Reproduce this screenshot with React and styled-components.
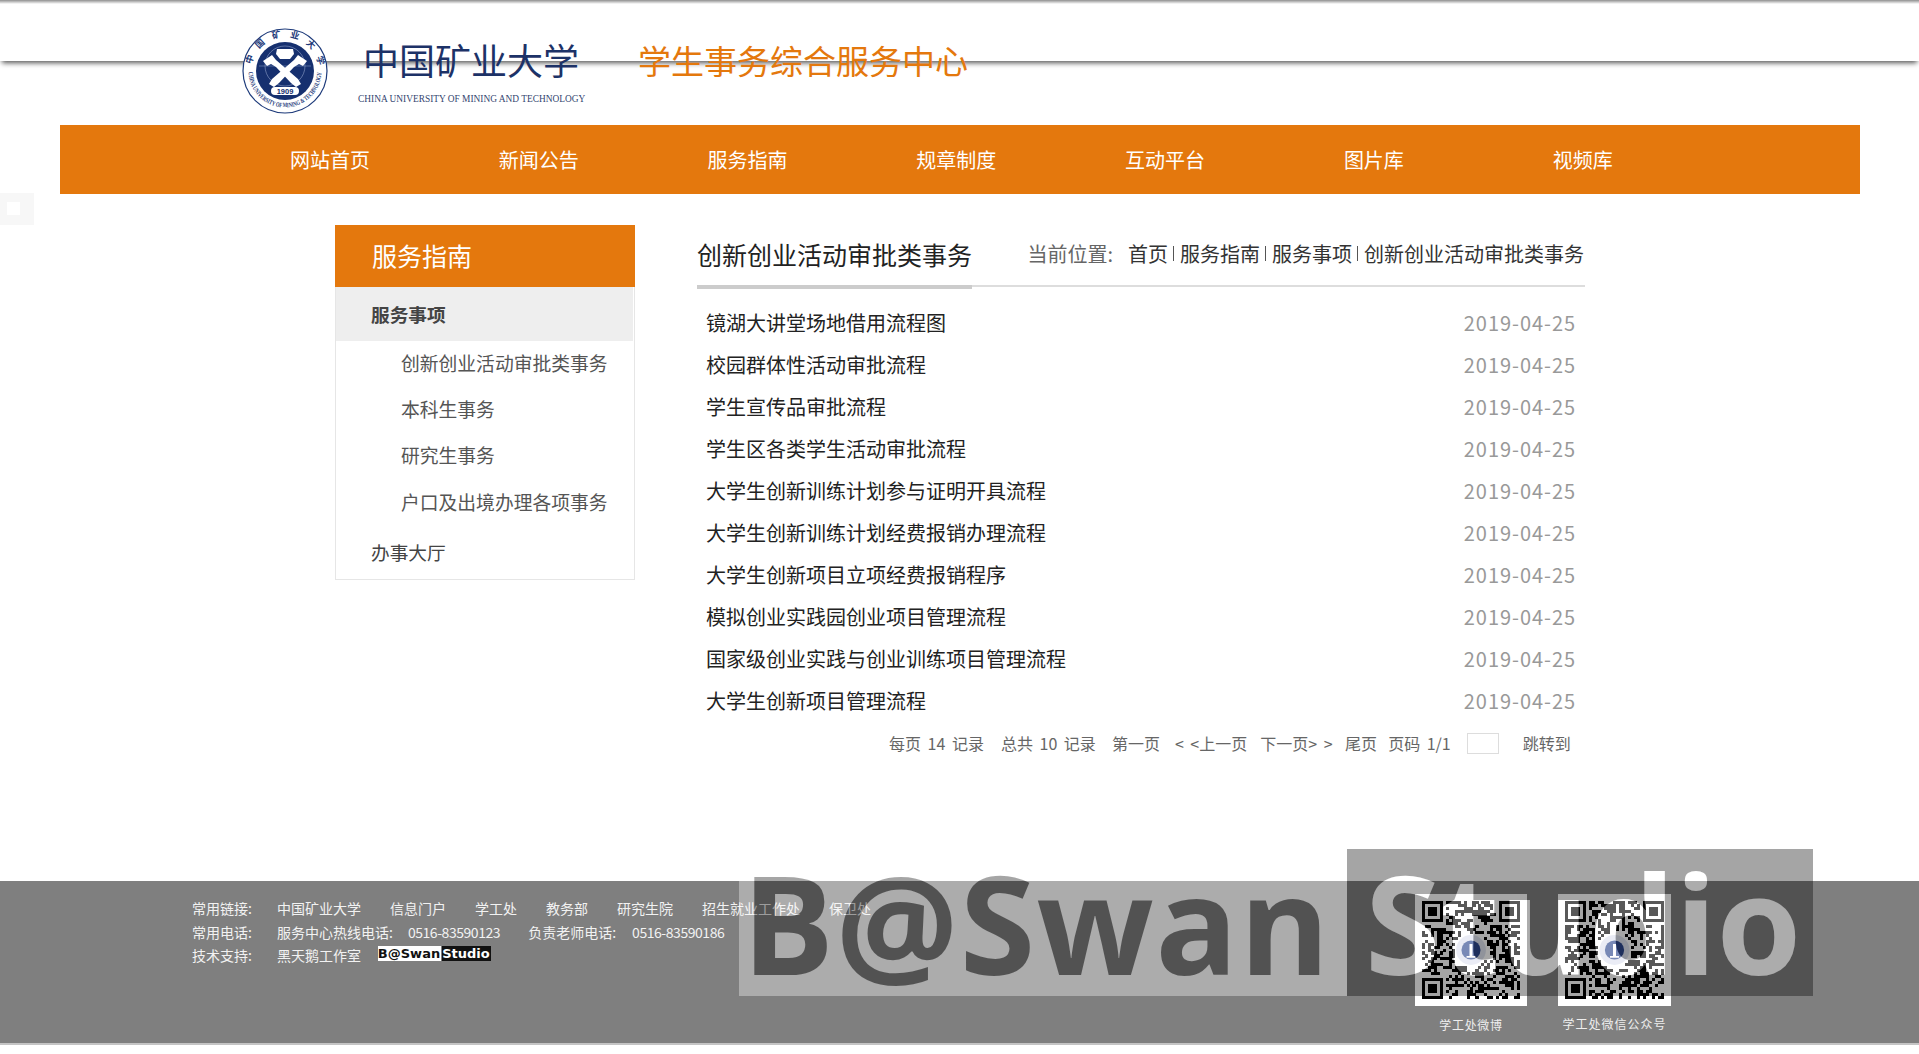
import React from 'react'
import styled, {createGlobalStyle} from 'styled-components'

const ORANGE = '#e4780d'
const FONT = `"Noto Sans CJK SC", "Noto Sans", sans-serif`

const GlobalStyle = createGlobalStyle`
    html, body {
        margin: 0;
        padding: 0;
        background: #fff;
        overflow: hidden;
    }
    body {
        font-family: ${FONT};
        font-weight: 400;
        color: #333;
    }
    a {
        color: inherit;
        text-decoration: none;
    }
`

const Page = styled.div`
    position: relative;
    width: 1919px;
    height: 1054px;
    overflow: hidden;
`

// the two soft grey lines behind the header
const ShadowBand = styled.div`
    position: absolute;
    top: 0;
    left: 0;
    right: 0;
    height: 61px;
    background: linear-gradient(#8f8f8f, #fff 4px);
    box-shadow: 0 4px 5px -2px #555;
`

const Header = styled.header`
    position: relative;
    height: 125px;
    padding-left: 242px;
    display: flex;
    align-items: flex-start;
    box-sizing: border-box;
`

const Seal = styled.svg`
    width: 86px;
    height: 86px;
    margin-top: 28px;
    flex: none;
`

const Wordmark = styled.div`
    width: 230px;
    margin: 34px 0 0 30px;
    flex: none;
`

const WordmarkCn = styled.div`
    font-size: 36px;
    line-height: 50px;
    color: #1d3267;
    padding-left: 5px;
    white-space: nowrap;
`

const WordmarkEn = styled.div`
    margin-top: 9px;
    font: 9.4px/12px "Liberation Serif", serif;
    color: #33456f;
    white-space: nowrap;
`

const SiteTitle = styled.h1`
    margin: 38px 0 0 50px;
    font-size: 33px;
    line-height: 44px;
    font-weight: 400;
    color: ${ORANGE};
    white-space: nowrap;
`

const Nav = styled.nav`
    position: relative;
    margin-left: 60px;
    width: 1800px;
    height: 69px;
    background: ${ORANGE};
    padding-left: 165.5px;
    box-sizing: border-box;
    display: flex;
    align-items: center;
`

const NavItem = styled.a`
    width: 208.8px;
    text-align: center;
    font-size: 20px;
    color: #fff;
`

const SideTab = styled.div`
    position: absolute;
    left: 0;
    top: 193px;
    width: 34px;
    height: 32px;
    background: #f7f7f7;
    &::after {
        content: "";
        position: absolute;
        left: 7px;
        top: 9px;
        width: 13px;
        height: 13px;
        background: #fff;
    }
`

const Content = styled.div`
    display: flex;
    align-items: flex-start;
    margin: 31px 0 0 335px;
`

const Sidebar = styled.aside`
    width: 300px;
    flex: none;
    margin-right: 62px;
`

const SideTitle = styled.div`
    height: 62px;
    line-height: 60px;
    padding-left: 37px;
    background: ${ORANGE};
    color: #fff;
    font-size: 25px;
`

const SideMenu = styled.div`
    height: 293px;
    box-sizing: border-box;
    border: 1px solid #e6e6e6;
    border-top: 0;
`

const SideHead = styled.div`
    height: 54px;
    line-height: ${p => p.$active ? '54px' : '52px'};
    padding-left: 35px;
    background: ${p => p.$active ? '#eee' : 'transparent'};
    font-size: 18.7px;
    font-weight: ${p => p.$active ? 700 : 400};
    color: #444;
    margin-right: ${p => p.$active ? '1px' : 0};
`

const SideSub = styled.div`
    height: 46.2px;
    line-height: 44px;
    padding-left: 65px;
    font-size: 18.8px;
    color: #555;
    white-space: nowrap;
`

const Main = styled.main`
    width: 888px;
    flex: none;
`

const MainHead = styled.div`
    height: 60px;
    display: flex;
    justify-content: space-between;
    align-items: center;
    padding-right: 1px;
    border-bottom: 2px solid #ddd;
`

const MainTitle = styled.h2`
    margin: 0 0 -4px;
    font-size: 25px;
    font-weight: 400;
    color: #222;
    height: 64px;
    line-height: 58px;
    border-bottom: 4px solid #ccc;
    box-sizing: border-box;
    white-space: nowrap;
`

const Crumbs = styled.div`
    font-size: 20px;
    color: #333;
    white-space: nowrap;
    margin-top: -3px;
    display: flex;
    align-items: center;
`

const CrumbLabel = styled.span`
    color: #666;
    margin-right: 15px;
`

const CrumbSep = styled.span`
    width: 1px;
    height: 15px;
    background: #555;
    margin: 0 6px 0 5px;
`

const List = styled.ul`
    list-style: none;
    margin: 15px 0 0;
    padding: 0 9px;
`

const Row = styled.li`
    display: flex;
    justify-content: space-between;
    height: 42px;
    line-height: 42px;
    font-size: 20px;
    color: #222;
`

const RowDate = styled.span`
    color: #999;
    letter-spacing: 0.95px;
`

const Pager = styled.div`
    display: flex;
    align-items: center;
    height: 22px;
    margin-top: 10px;
    padding-left: 192px;
    font-size: 16px;
    word-spacing: 3px;
    color: #666;
    white-space: nowrap;
`

const PagerItem = styled.span`
    margin-right: ${p => p.$gap}px;
`

const PagerInput = styled.input`
    width: 32px;
    height: 21px;
    box-sizing: border-box;
    padding: 0;
    border: 1px solid #ddd;
    background: #fff;
    margin-right: 24px;
`

const Footer = styled.footer`
    position: absolute;
    left: 0;
    right: 0;
    top: 881px;
    height: 162px;
    background: #7f7f7f;
    border-bottom: 2px solid #c4c4c4;
`

const FooterInfo = styled.div`
    padding: 16px 0 0 192px;
    font-size: 14px;
    color: #f2f2f2;
`

const InfoLine = styled.div`
    height: 23.5px;
    line-height: 23.5px;
    display: flex;
    align-items: center;
    white-space: nowrap;
`

const InfoLabel = styled.span`
    width: 85px;
    flex: none;
`

const InfoLink = styled.a`
    margin-right: ${p => p.$gap || 29}px;
`

const Phone = styled.span`
    letter-spacing: -0.45px;
    margin-right: ${p => p.$gap || 0}px;
`

const MiniLogo = styled.span`
    display: flex;
    margin-left: -12.5px;
    height: 15px;
    font: 700 13px/15px "DejaVu Sans", sans-serif;
    transform: translateY(-2px);
`

const MiniLeft = styled.span`
    background: #fff;
    color: #111;
    width: 63px;
    text-align: center;
    white-space: nowrap;
    overflow: hidden;
`

const MiniRight = styled.span`
    background: #111;
    color: #fff;
    width: 49px;
    margin-left: 1px;
    text-align: center;
    white-space: nowrap;
    overflow: hidden;
`

const QrGroup = styled.div`
    position: absolute;
    top: 13px;
    left: ${p => p.$left}px;
    width: ${p => p.$width}px;
    display: flex;
    flex-direction: column;
    align-items: center;
`

const QrBox = styled.svg`
    display: block;
    width: 100%;
    height: 112px;
    background: #fff;
`

const QrCaption = styled.div`
    margin-top: ${p => p.$top}px;
    font-size: 12px;
    line-height: 18px;
    font-weight: 400;
    letter-spacing: ${p => p.$spacing}px;
    color: #eee;
    white-space: nowrap;
`

// translucent studio banner laid over the footer
const Banner = styled.div`
    position: absolute;
    left: 739px;
    top: 849px;
    width: 1074px;
    height: 147px;
    display: flex;
    opacity: 0.35;
    pointer-events: none;
    overflow: hidden;
    font-family: "Open Sans", sans-serif;
    font-weight: 700;
    font-size: 137px;
    line-height: 147px;
`

const BannerLeft = styled.div`
    width: 608px;
    background: #fff;
    color: #000;
    padding-left: 3px;
    letter-spacing: 1.4px;
    box-sizing: border-box;
    white-space: nowrap;
`

const BannerRight = styled.div`
    flex: 1;
    background: #000;
    color: #fff;
    padding-left: 18px;
    letter-spacing: -0.4px;
    box-sizing: border-box;
    white-space: nowrap;
`

const navItems = ['网站首页', '新闻公告', '服务指南', '规章制度', '互动平台', '图片库', '视频库']
const subItems = ['创新创业活动审批类事务', '本科生事务', '研究生事务', '户口及出境办理各项事务']
const rows = [
    '镜湖大讲堂场地借用流程图',
    '校园群体性活动审批流程',
    '学生宣传品审批流程',
    '学生区各类学生活动审批流程',
    '大学生创新训练计划参与证明开具流程',
    '大学生创新训练计划经费报销办理流程',
    '大学生创新项目立项经费报销程序',
    '模拟创业实践园创业项目管理流程',
    '国家级创业实践与创业训练项目管理流程',
    '大学生创新项目管理流程',
]
const links = ['中国矿业大学', '信息门户', '学工处', '教务部', '研究生院', '招生就业工作处', '保卫处']
const pager = [
    ['每页 14 记录', 17], ['总共 10 记录', 16], ['第一页', 15],
    ['< <上一页', 13], ['下一页> >', 12.5], ['尾页', 11], ['页码 1/1', 16],
]

// modules of a 33x33 code, seeded so both codes stay stable between renders
function buildQr(seed) {
    const size = 33
    let s = seed
    const next = () => {
        s = (s * 1103515245 + 12345) & 0x7fffffff
        return (s >> 16) / 32768
    }
    const cells = []
    const inFinder = (x, y) => (x < 8 && y < 8) || (x > 24 && y < 8) || (x < 8 && y > 24)
    for (let y = 0; y < size; y++) {
        for (let x = 0; x < size; x++) {
            const d = Math.hypot(x - 16, y - 16)
            if (inFinder(x, y) || d < 6) continue
            if (next() > 0.5) cells.push([x, y])
        }
    }
    return cells
}

const Finder = ({x, y}) => (
    <g>
        <rect x={x} y={y} width="7" height="7" fill="#000"/>
        <rect x={x + 1} y={y + 1} width="5" height="5" fill="#fff"/>
        <rect x={x + 2} y={y + 2} width="3" height="3" fill="#000"/>
    </g>
)

const QrCode = ({seed}) => (
    <QrBox viewBox="-2.3 -2.3 37.6 37.6" preserveAspectRatio="none">
        <g shapeRendering="crispEdges">
            {buildQr(seed).map(([x, y]) => <rect key={`${x}-${y}`} x={x} y={y} width="1.02" height="1.02" fill="#000"/>)}
            <Finder x={0} y={0}/>
            <Finder x={26} y={0}/>
            <Finder x={0} y={26}/>
        </g>
        <circle cx="16.5" cy="16.5" r="5" fill="#dfe3f0"/>
        <circle cx="16.5" cy="16.5" r="3.2" fill="#2f4a8f"/>
        <path d="M16 14.5h1v4h-1zM15 18.5h3v.6h-3z" fill="#fff"/>
    </QrBox>
)

const CrestLogo = () => (
    <Seal viewBox="0 0 86 86">
        <defs>
            <path id="sealTop" d="M9 43a34 34 0 0 1 68 0"/>
            <path id="sealBottom" d="M6.500 43a36.500 36.500 0 0 0 73 0"/>
        </defs>
        <circle cx="43" cy="43" r="42" fill="#fff" stroke="#1d3a7a" strokeWidth="1.2"/>
        <circle cx="43" cy="43" r="29" fill="#16306f"/>
        <text fontSize="9" fontWeight="700" fill="#1d3a7a" fontFamily={FONT}>
            <textPath href="#sealTop" startOffset="6%" textLength="95" lengthAdjust="spacing">中国矿业大学</textPath>
        </text>
        <text fontSize="6.6" fontWeight="700" fill="#1d3a7a" fontFamily='"Liberation Serif", serif'>
            <textPath href="#sealBottom" startOffset="1%" textLength="112" lengthAdjust="spacingAndGlyphs">CHINA UNIVERSITY OF MINING &amp; TECHNOLOGY</textPath>
        </text>
        <circle cx="43" cy="38" r="20" fill="none" stroke="#8ea0c8" strokeWidth="0.6"/>
        <path d="M17 38h52" stroke="#8ea0c8" strokeWidth="0.5"/>
        <path d="M35 21h16l1 5-4 5h-10l-4-5z" fill="#fff"/>
        <path d="M21 33l9-6 4 5 22 19 3 5-5 3-5-4-15-16-5-3-4 2z" fill="#fff"/>
        <path d="M65 33l-9-6-4 5-22 19-3 5 5 3 5-4 15-16 5-3 4 2z" fill="#fff"/>
        <rect x="29" y="59" width="28" height="8" rx="4" fill="#fff"/>
        <text x="43" y="66" textAnchor="middle" fontSize="7.500" fontWeight="700" fill="#16306f" fontFamily='"Liberation Sans", sans-serif'>1909</text>
    </Seal>
)

const App = () => (
    <Page>
        <GlobalStyle/>
        <ShadowBand/>
        <Header>
            <CrestLogo/>
            <Wordmark>
                <WordmarkCn>中国矿业大学</WordmarkCn>
                <WordmarkEn>CHINA UNIVERSITY OF MINING AND TECHNOLOGY</WordmarkEn>
            </Wordmark>
            <SiteTitle>学生事务综合服务中心</SiteTitle>
        </Header>
        <Nav>
            {navItems.map(item => <NavItem key={item}>{item}</NavItem>)}
        </Nav>
        <SideTab/>
        <Content>
            <Sidebar>
                <SideTitle>服务指南</SideTitle>
                <SideMenu>
                    <SideHead $active>服务事项</SideHead>
                    {subItems.map(item => <SideSub key={item}>{item}</SideSub>)}
                    <SideHead>办事大厅</SideHead>
                </SideMenu>
            </Sidebar>
            <Main>
                <MainHead>
                    <MainTitle>创新创业活动审批类事务</MainTitle>
                    <Crumbs>
                        <CrumbLabel>当前位置:</CrumbLabel>
                        <a>首页</a><CrumbSep/>
                        <a>服务指南</a><CrumbSep/>
                        <a>服务事项</a><CrumbSep/>
                        <a>创新创业活动审批类事务</a>
                    </Crumbs>
                </MainHead>
                <List>
                    {rows.map(text => (
                        <Row key={text}>
                            <a>{text}</a>
                            <RowDate>2019-04-25</RowDate>
                        </Row>
                    ))}
                </List>
                <Pager>
                    {pager.map(([text, gap]) => <PagerItem key={text} $gap={gap}>{text}</PagerItem>)}
                    <PagerInput/>
                    <span>跳转到</span>
                </Pager>
            </Main>
        </Content>
        <Footer>
            <FooterInfo>
                <InfoLine>
                    <InfoLabel>常用链接:</InfoLabel>
                    {links.map(link => <InfoLink key={link}>{link}</InfoLink>)}
                </InfoLine>
                <InfoLine>
                    <InfoLabel>常用电话:</InfoLabel>
                    <InfoLink $gap={15}>服务中心热线电话:</InfoLink>
                    <Phone $gap={28}>0516-83590123</Phone>
                    <InfoLink $gap={16}>负责老师电话:</InfoLink>
                    <Phone>0516-83590186</Phone>
                </InfoLine>
                <InfoLine>
                    <InfoLabel>技术支持:</InfoLabel>
                    <InfoLink>黑天鹅工作室</InfoLink>
                    <MiniLogo>
                        <MiniLeft>B@Swan</MiniLeft>
                        <MiniRight>Studio</MiniRight>
                    </MiniLogo>
                </InfoLine>
            </FooterInfo>
            <QrGroup $left={1415} $width={112}>
                <QrCode seed={77}/>
                <QrCaption $top={10} $spacing={0.7}>学工处微博</QrCaption>
            </QrGroup>
            <QrGroup $left={1558} $width={113}>
                <QrCode seed={4242}/>
                <QrCaption $top={9} $spacing={1}>学工处微信公众号</QrCaption>
            </QrGroup>
        </Footer>
        <Banner>
            <BannerLeft>B@Swan</BannerLeft>
            <BannerRight>Studio</BannerRight>
        </Banner>
    </Page>
)

export default App
